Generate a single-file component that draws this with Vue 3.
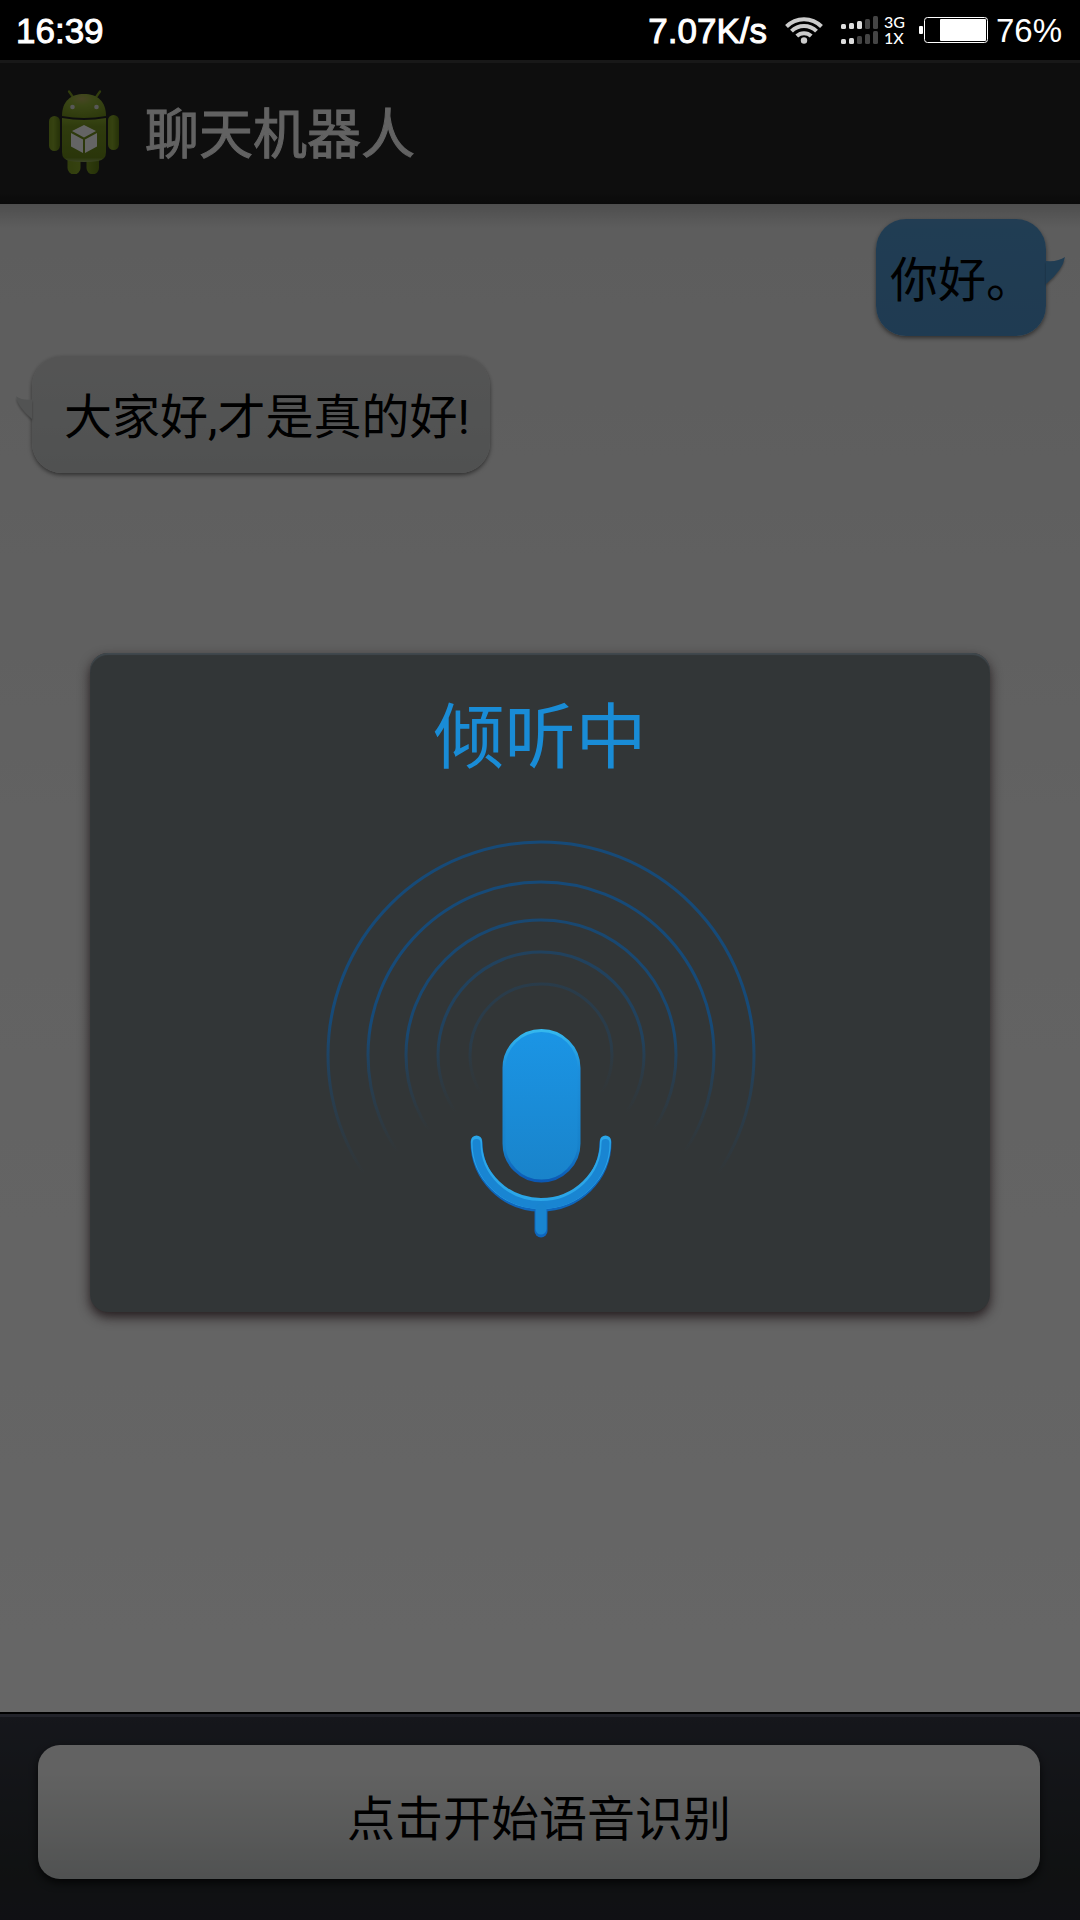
<template>
  <div class="phone">
    <div class="status">
      <span class="clock">16:39</span>
      <div class="indicators">
        <span class="clock">7.07K/s</span>
        <svg class="wifi" width="38" height="28" viewBox="0 0 38 28">
          <g fill="none" stroke="#cccccc" stroke-width="4">
            <path d="M1.5 10.5A24.5 24.5 0 0 1 36.5 10.5" />
            <path d="M6.5 15.2A17.5 17.5 0 0 1 31.5 15.2" />
            <path d="M11.8 20A10.5 10.5 0 0 1 26.2 20" />
          </g>
          <circle cx="19" cy="24.5" r="3.2" fill="#cccccc" />
        </svg>
        <svg class="signal" width="37" height="28" viewBox="0 0 37 28">
          <rect
            v-for="bar in bars"
            :key="bar.id"
            :x="bar.x"
            :y="bar.y"
            :height="bar.h"
            width="5"
            rx="1.5"
            :fill="bar.on ? '#dddddd' : '#444444'"
          />
        </svg>
        <span class="network"><span>3G</span><span>1X</span></span>
        <svg class="battery" width="69" height="26" viewBox="0 0 69 26">
          <rect x="0" y="9" width="4" height="8" rx="1" fill="#fff" />
          <rect x="5.5" y="0.5" width="63" height="25" rx="3" fill="none" stroke="#fff" />
          <rect x="21" y="2" width="46" height="22" rx="1" fill="#fff" />
        </svg>
        <span class="percent">76%</span>
      </div>
    </div>

    <div class="app">
      <header class="bar">
        <svg class="robot-icon" width="70" height="84" viewBox="0 0 70 84">
          <defs>
            <linearGradient id="limb" x1="0" y1="0" x2="1" y2="0">
              <stop offset="0" stop-color="#7c9a22" />
              <stop offset="0.4" stop-color="#87a62a" />
              <stop offset="1" stop-color="#5e7a14" />
            </linearGradient>
            <linearGradient id="torso" x1="0" y1="0" x2="0" y2="1">
              <stop offset="0" stop-color="#8cab30" />
              <stop offset="0.2" stop-color="#769422" />
              <stop offset="0.9" stop-color="#69861a" />
              <stop offset="1" stop-color="#95ab60" />
            </linearGradient>
            <radialGradient id="head" cx="0.45" cy="0.2" r="0.9">
              <stop offset="0" stop-color="#b4ac5c" />
              <stop offset="0.3" stop-color="#92b038" />
              <stop offset="1" stop-color="#6f8d1c" />
            </radialGradient>
          </defs>
          <path d="M20 1.5L25 8.5M51 1.5L46 8.5" stroke="#7c9a22" stroke-width="2.2" stroke-linecap="round" />
          <rect x="0" y="26" width="11" height="35" rx="5.5" fill="url(#limb)" />
          <rect x="59" y="25" width="11" height="35" rx="5.5" fill="url(#limb)" />
          <path d="M18.500 64h13v14a6 6 0 0 1-13 0zM37.500 64h12.500v14a6 6 0 0 1-12.500 0z" fill="url(#limb)" />
          <path d="M13 28Q35 32 57 28V62Q57 70 49 71Q35 73 21 71Q13 70 13 62z" fill="url(#torso)" />
          <path d="M13 26C13 11 22 4 35 4S57 11 57 26Q35 30 13 26z" fill="url(#head)" />
          <circle cx="23.500" cy="17" r="2.300" fill="#ddd" />
          <circle cx="47.500" cy="17" r="2.300" fill="#ddd" />
          <path d="M35 35L47 41L35 47.500L23 41zM22 43L34 49.500V63L22 56.500zM48 43L36 49.500V63L48 56.500z" fill="#fbfbfb" />
        </svg>
        <h1>聊天机器人</h1>
      </header>

      <ul class="chat">
        <li v-for="msg in messages" :key="msg.id" :class="['bubble', msg.from]">
          {{ msg.text }}
          <svg class="tail" width="19" height="28" viewBox="0 0 19 28">
            <path d="M0 4Q12 5 19 0Q17 13 0 27z" />
          </svg>
        </li>
      </ul>

      <footer class="bottom">
        <button type="button" class="start" @click="listening = true">点击开始语音识别</button>
      </footer>

      <div v-if="listening" class="scrim" @click.self="listening = false">
        <section class="dialog" role="dialog" aria-labelledby="state">
          <h2 id="state">倾听中</h2>
          <svg class="mic" width="440" height="410" viewBox="320 834 440 410">
            <defs>
              <linearGradient id="wave" x1="0" y1="0" x2="0" y2="1">
                <stop offset="0.42" stop-color="#164a78" />
                <stop offset="0.58" stop-color="#164a78" stop-opacity="0.4" />
                <stop offset="0.78" stop-color="#164a78" stop-opacity="0" />
              </linearGradient>
              <linearGradient id="capsule" x1="0" y1="0" x2="0" y2="1">
                <stop offset="0" stop-color="#1b95e5" />
                <stop offset="1" stop-color="#1983ca" />
              </linearGradient>
              <linearGradient id="rim" x1="0" y1="0" x2="0" y2="1">
                <stop offset="0" stop-color="#35b8ee" />
                <stop offset="0.25" stop-color="#1c8fdc" />
                <stop offset="0.78" stop-color="#1782cb" />
                <stop offset="1" stop-color="#0b58b4" />
              </linearGradient>
            </defs>
            <circle
              v-for="wave in waves"
              :key="wave.r"
              cx="541"
              cy="1055"
              :r="wave.r"
              :opacity="wave.opacity"
              fill="none"
              stroke="url(#wave)"
              stroke-width="3"
            />
            <rect x="504" y="1030.500" width="75" height="150.500" rx="37.500" fill="url(#capsule)" stroke="url(#rim)" stroke-width="3" />
            <g fill="none" stroke-linecap="round">
              <path d="M541 1206V1231" stroke="#0f66bc" stroke-width="13" />
              <path d="M476.500 1142A64.500 63.500 0 0 0 605.500 1142" stroke="#0f66bc" stroke-width="12" />
              <path d="M476.500 1141A64.500 62.500 0 0 0 605.500 1141" stroke="#2ba6e8" stroke-width="11" />
              <path d="M476.500 1143A64.500 62 0 0 0 605.500 1143" stroke="#1985d2" stroke-width="8" />
              <path d="M541 1209V1229" stroke="#1985d0" stroke-width="11" />
            </g>
          </svg>
        </section>
      </div>
    </div>
  </div>
</template>

<script setup>
import { ref } from 'vue'

const listening = ref(true)

const messages = ref([
  { id: 1, from: 'me', text: '你好。' },
  { id: 2, from: 'robot', text: '大家好,才是真的好!' }
])

// rings around the microphone
const waves = [
  { r: 213, opacity: 1 },
  { r: 173, opacity: 1 },
  { r: 135, opacity: 0.9 },
  { r: 103, opacity: 0.6 },
  { r: 71, opacity: 0.3 }
]

// two sim cards, five bars each
const heights = [5, 6, 8, 10, 13]
const bars = [
  { bottom: 13, level: 3 },
  { bottom: 28, level: 2 }
].flatMap((sim) =>
  heights.map((h, i) => ({
    id: sim.bottom + '-' + i,
    x: i * 8,
    y: sim.bottom - h,
    h,
    on: i < sim.level
  }))
)
</script>

<style>
body {
  margin: 0;
  background: #000;
}
</style>

<style scoped>
.phone {
  display: flex;
  flex-direction: column;
  min-height: 100vh;
  font-family: Roboto, "Noto Sans CJK SC", sans-serif;
}
.status {
  display: flex;
  justify-content: space-between;
  align-items: center;
  box-sizing: border-box;
  height: 60px;
  padding: 0 18px 0 16px;
  background: #000;
  color: #fff;
  font-family: "Liberation Sans", sans-serif;
}
.clock {
  padding-top: 2px;
  font-size: 35px;
  line-height: 40px;
  -webkit-text-stroke: 1px #fff;
}
.indicators {
  display: flex;
  align-items: center;
}
.wifi {
  margin-left: 18px;
}
.signal {
  margin-left: 18px;
}
.network {
  display: flex;
  flex-direction: column;
  margin: 0 14px 0 6px;
  font-family: Lato, sans-serif;
  font-size: 16px;
  font-weight: 500;
  line-height: 16px;
}
.percent {
  margin-left: 8px;
  padding-top: 2px;
  font-size: 33px;
  line-height: 40px;
}
.app {
  position: relative;
  flex: 1;
  display: flex;
  flex-direction: column;
}
.bar {
  display: flex;
  align-items: center;
  gap: 26px;
  height: 141px;
  padding: 0 49px;
  border-top: 3px solid #3e3e3e;
  background: linear-gradient(#242424 92%, #1a1a1a);
}
.robot-icon {
  margin-bottom: 4px;
}
.bar h1 {
  margin: 0;
  padding-top: 4px;
  color: #f5f5f5;
  font-size: 54px;
  font-weight: 400;
  line-height: 80px;
  -webkit-text-stroke: 1px #f5f5f5;
}
.chat {
  flex: 1;
  display: flex;
  flex-direction: column;
  gap: 20px;
  margin: 0;
  padding: 15px 32px;
  list-style: none;
  background:
    linear-gradient(rgba(0, 0, 0, 0.16), rgba(0, 0, 0, 0) 24px),
    linear-gradient(#e8e8e8, #f4f4f4 40%, #ffffff);
}
.bubble {
  position: relative;
  padding: 27px 20px 20px 32px;
  border-radius: 30px;
  color: #000;
  font-size: 48px;
  line-height: 70px;
  box-shadow: 0 2px 4px rgba(0, 0, 0, 0.5);
}
.me {
  align-self: flex-end;
  margin-right: 2px;
  padding: 27px 12px 20px 14px;
  background: linear-gradient(#5699cf, #5298d0 10%, #4f94cc);
  fill: #5298d0;
}
.robot {
  align-self: flex-start;
  background: linear-gradient(#d2d2d2, #cccfcf 60%, #c8caca);
  fill: #cccfcf;
}
.tail {
  position: absolute;
  top: 38px;
  left: 100%;
  filter: drop-shadow(0 2px 1px rgba(0, 0, 0, 0.3));
}
.robot .tail {
  left: auto;
  right: 100%;
  width: 16px;
  transform: scaleX(-1);
}
.bottom {
  padding: 28px 40px 41px 38px;
  border-top: 2px solid #000;
  background: linear-gradient(#373a46, #282c2e 80%, #282a34);
  box-shadow: inset 0 3px 0 #55586a;
}
.start {
  display: block;
  width: 100%;
  margin-top: 3px;
  padding: 40px 0 24px;
  border: none;
  border-radius: 22px;
  background: linear-gradient(#f5f5f5 20%, #e0e2e1 60%, #c8cccc);
  color: #000;
  font-family: inherit;
  font-size: 48px;
  line-height: 70px;
  box-shadow: 0 4px 8px rgba(0, 0, 0, 0.7);
}
.scrim {
  position: absolute;
  inset: 0;
  display: flex;
  align-items: center;
  padding: 0 90px 16px;
  background: rgba(0, 0, 0, 0.6);
}
.dialog {
  flex: 1;
  display: flex;
  flex-direction: column;
  align-items: center;
  padding: 32px 0 68px;
  border-radius: 18px;
  background: #323637;
  box-shadow:
    inset 0 2px 1px #40484d,
    0 5px 12px rgba(20, 10, 12, 0.8);
}
.dialog h2 {
  margin: 0 0 43px;
  color: #198cd6;
  font-size: 71px;
  font-weight: 400;
  line-height: 106px;
}
</style>
